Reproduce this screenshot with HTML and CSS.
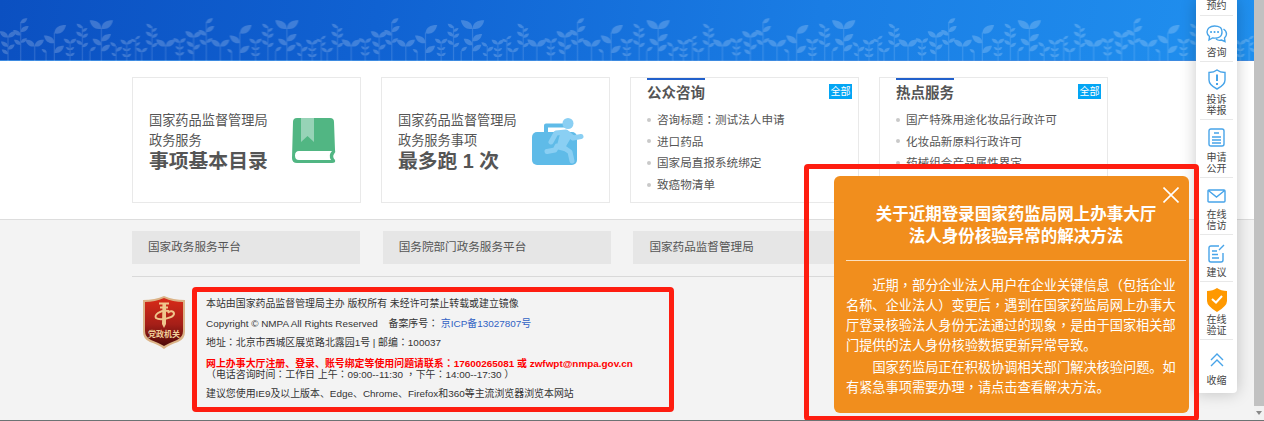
FILE: index.html
```
<!DOCTYPE html>
<html>
<head>
<meta charset="utf-8">
<title>国家药品监督管理局网上办事大厅</title>
<link rel="stylesheet" href="styles.css">
</head>
<body>
<div class="window">
<div class="page">
  <header class="banner">
    <svg class="plants" width="1254" height="61" viewBox="0 0 1254 61">
      <defs>
        <path id="r" d="M0 0C1-13 10-18 25-18C22-4 12 3 0 0Z"/>
        <path id="l" d="M0 0C-1-13-10-18-25-18C-22-4-12 3 0 0Z"/>
        <g id="pair"><use href="#l"/><use href="#r"/></g>
        <g id="bush"><path class="stem" d="M0 0V54"/><use href="#pair" transform="scale(.75)"/><use href="#pair" transform="translate(0 20) scale(.5)"/><use href="#pair" transform="translate(0 38) scale(.55)"/></g>
        <g id="vine"><path class="stem" d="M0-2V100"/><use href="#l" transform="translate(0 3) scale(.7)"/><use href="#r" transform="translate(0 14) scale(.6)"/><use href="#l" transform="translate(0 28) scale(.75)"/><use href="#r" transform="translate(0 32) scale(.7)"/><use href="#l" transform="translate(0 53) scale(.75)"/><use href="#r" transform="translate(0 60) scale(.7)"/></g>
        <pattern id="field" width="185.6" height="61" patternUnits="userSpaceOnUse">
          <g transform="scale(.3333)" class="plant">
            <path class="stem" d="M24 110V183M62 65V183M104 138V183M163 98V183M138 158V183M270 153V183M304 84V183M348 138V183M407 115V183M425 155V183M497 138V183"/>
            <use href="#pair" transform="translate(24 112)"/><use href="#l" transform="translate(24 140) scale(.85)"/><use href="#r" transform="translate(24 148) scale(.8)"/><use href="#l" transform="translate(24 162) scale(.75)"/>
            <use href="#l" transform="translate(581 112)"/>
            <use href="#r" transform="translate(62 69) scale(.8)"/><use href="#r" transform="translate(62 95) scale(.95)"/><use href="#l" transform="translate(62 106) scale(.9)"/><use href="#r" transform="translate(62 128) scale(.75)"/><use href="#l" transform="translate(62 134) scale(.8)"/>
            <use href="#pair" transform="translate(104 139) scale(1.1)"/>
            <use href="#r" transform="translate(163 100) scale(1.4)"/><use href="#l" transform="translate(163 129) scale(1.25)"/><use href="#r" transform="translate(163 158) scale(1.15)"/><use href="#l" transform="translate(140 158) scale(.6)"/>
            <use href="#bush" transform="translate(210 130)"/>
            <use href="#vine" transform="translate(247 81)"/>
            <use href="#r" transform="translate(270 153) scale(.7)"/>
            <use href="#pair" transform="translate(304 86) scale(1.4)"/><use href="#r" transform="translate(304 123) scale(1.15)"/><use href="#l" transform="translate(304 135) scale(1.05)"/><use href="#r" transform="translate(304 153) scale(1.05)"/>
            <use href="#l" transform="translate(348 139) scale(.7)"/><use href="#r" transform="translate(348 154) scale(.75)"/><use href="#l" transform="translate(348 168) scale(.55)"/>
            <use href="#bush" transform="translate(380 133)"/>
            <use href="#r" transform="translate(407 117) scale(.55)"/><use href="#l" transform="translate(407 126) scale(.55)"/><use href="#r" transform="translate(407 137) scale(.55)"/>
            <use href="#pair" transform="translate(425 156) scale(.7)"/>
            <use href="#vine" transform="translate(456 81)"/>
            <use href="#pair" transform="translate(497 139) scale(1.15)"/>
            <use href="#bush" transform="translate(539 128)"/>
          </g>
        </pattern>
      </defs>
      <rect width="1254" height="61" fill="url(#field)"/>
    </svg>
  </header>

  <main class="services">
    <section class="card entry">
      <div class="entry-text"><p>国家药品监督管理局<br>政务服务</p><h2>事项基本目录</h2></div>
      <svg class="book" width="44" height="46" viewBox="0 0 44 46">
        <path fill="#51b683" d="M5 0H38Q42 0 42 4L43 32Q44 34 42 36Q40 39 43 42Q44 45 40 45H5Q0 45 0 40L1 4Q1 0 5 0Z"/>
        <path fill="#fff" d="M7 33H40Q36 37 39 42H7Q3 42 3 37.500Q3 33 7 33Z"/>
        <path fill="#97d3b7" d="M9 0H22V24L15.500 18L9 24Z"/>
      </svg>
    </section>
    <section class="card entry">
      <div class="entry-text"><p>国家药品监督管理局<br>政务服务事项</p><h2>最多跑 1 次</h2></div>
      <svg class="case" width="53" height="47" viewBox="0 0 53 47">
        <path fill="none" stroke="#5fbbe8" stroke-width="4" stroke-linejoin="round" d="M14 15V7.500H34"/>
        <rect y="14" width="45" height="33" rx="5" fill="#5fbbe8"/>
        <circle cx="36" cy="5.500" r="5.500" fill="#8acff3"/>
        <path fill="none" stroke="#8acff3" stroke-width="5" stroke-linecap="round" stroke-linejoin="round" d="M19 24L24 15L34 14L41 20L49 18.500M25 28L23 32L15 33.500M31 29L38 34L40 43"/>
        <path fill="#8acff3" d="M25 13H37L40 18L33 30L36 34L24 31L28 16Z"/>
      </svg>
    </section>
    <section class="card news">
      <div class="news-head"><h3>公众咨询</h3><a>全部</a></div>
      <ul><li><span>咨询标题<i>：</i>测试法人申请</span></li><li>进口药品</li><li>国家局直报系统绑定</li><li>致癌物清单</li></ul>
    </section>
    <section class="card news">
      <div class="news-head"><h3>热点服务</h3><a>全部</a></div>
      <ul><li>国产特殊用途化妆品行政许可</li><li>化妆品新原料行政许可</li><li>药械组合产品属性界定</li></ul>
    </section>
  </main>

  <footer class="footer">
    <nav class="links"><a>国家政务服务平台</a><a>国务院部门政务服务平台</a><a>国家药品监督管理局</a><a></a></nav>
    <div class="about">
      <svg class="badge" width="44" height="53" viewBox="0 0 44 53">
        <defs><linearGradient id="red" x2="0" y2="1"><stop offset="0" stop-color="#d92b18"/><stop offset=".55" stop-color="#a51f18"/><stop offset="1" stop-color="#4c0908"/></linearGradient></defs>
        <path fill="#dbb387" d="M22 0Q31 4 43 4V36Q43 43 36 46Q27 49 22 53Q17 49 8 46Q1 43 1 36V4Q13 4 22 0Z"/>
        <path fill="url(#red)" d="M22 2Q31 6 41 6V35Q41 41 35 44Q27 47 22 50Q17 47 9 44Q3 41 3 35V6Q13 6 22 2Z"/>
        <path fill="none" stroke="#efc78c" stroke-width="2" d="M17 7.500H27M18 11.500H26M27 15C17 14 12 19 14 22C18 25 31 22 32 18C32 15 28 14 26 17"/>
        <path fill="#efc78c" d="M20.500 7H24V28L22 32L20 28Z"/>
        <text x="22" y="41" text-anchor="middle">党政机关</text>
      </svg>
      <div class="legal">
        <p>本站由国家药品监督管理局主办 版权所有 未经许可禁止转载或建立镜像</p>
        <p class="copy">Copyright © NMPA All Rights Reserved <span>备案序号<i>：</i> <a>京ICP备13027807号</a></span></p>
        <p>地址<i>：</i>北京市西城区展览路北露园1号 | 邮编<i>：</i>100037</p>
        <p class="contact"><b>网上办事大厅注册、登录、账号绑定等使用问题请联系<i>：</i>17600265081 或 zwfwpt@nmpa.gov.cn</b><br>（电话咨询时间<i>：</i>工作日 上午<i>：</i>09:00--11:30 <i>，</i>下午<i>：</i>14:00--17:30 ）</p>
        <p>建议您使用IE9及以上版本、Edge、Chrome、Firefox和360等主流浏览器浏览本网站</p>
      </div>
    </div>
  </footer>
</div>
<div class="scrollbar"><div class="down"></div></div>

<aside class="rail">
  <a class="i1">预约</a>
  <a class="i2"><svg width="22" height="18" viewBox="0 0 22 18"><path d="M14.500 2.500Q12 1 8.500 1C4 1 1 3.500 1 7Q1 9.500 3.500 11.500L3 15L6.500 13Q16 14 16 7Q16 4 14.500 2.500M17.500 4Q20.500 6 20.500 9Q20.500 11 18.500 13L19 16.500L15.500 15Q12.500 16 10 14"/><path class="dots" d="M5 7h.1M8.500 7h.1M12 7h.1"/></svg><span>咨询</span></a>
  <a class="i3"><svg width="18" height="21" viewBox="0 0 18 21"><path d="M9 1Q12 3.500 17 3.500V11Q17 16 9 20Q1 16 1 11V3.500Q6 3.500 9 1Z"/><path class="bold" d="M9 5.500V12M9 14V16"/></svg><span>投诉<br>举报</span></a>
  <a class="i4"><svg width="17" height="19" viewBox="0 0 17 19"><path d="M3 1H14Q16 1 16 3V16Q16 18 14 18H3Q1 18 1 16V3Q1 1 3 1ZM6 5H11M4 9H13M4 12H13M4 15H13"/></svg><span>申请<br>公开</span></a>
  <a class="i5"><svg width="19" height="14" viewBox="0 0 19 14"><path d="M2 1H17Q18 1 18 2V12Q18 13 17 13H2Q1 13 1 12V2Q1 1 2 1ZM2 2L9.500 8L17 2"/></svg><span>在线<br>信访</span></a>
  <a class="i6"><svg width="17" height="19" viewBox="0 0 17 19"><path d="M11 2H3Q1 2 1 4V16Q1 18 3 18H13Q15 18 15 16V9M4 7H9M4 10.500H10M4 14H11M16 1L11 6"/></svg><span>建议</span></a>
  <a class="i7"><svg width="20" height="24" viewBox="0 0 20 24"><path class="solid" d="M10 0Q14 3 20 3V13Q20 18 10 24Q0 18 0 13V3Q6 3 10 0Z"/><path class="tick" d="M5 11L9 14.500L15 8"/></svg><span>在线<br>验证</span></a>
  <a class="i8"><svg width="14" height="14" viewBox="0 0 14 14"><path d="M1 7L7 1L13 7M1 13L7 7L13 13"/></svg><span>收缩</span></a>
</aside>

<div class="popup">
  <svg class="close" width="16" height="16" viewBox="0 0 16 16"><path d="M.5.500L15.500 15.500M15.500.500L.5 15.500"/></svg>
  <h1>关于近期登录国家药监局网上办事大厅<br>法人身份核验异常的解决方法</h1>
  <div class="popup-body">
    <p>近期<i>，</i>部分企业法人用户在企业关键信息（包括企业<br>名称、企业法人）变更后<i>，</i>遇到在国家药监局网上办事大<br>厅登录核验法人身份无法通过的现象<i>，</i>是由于国家相关部<br>门提供的法人身份核验数据更新异常导致。</p>
    <p>国家药监局正在积极协调相关部门解决核验问题。如<br>有紧急事项需要办理<i>，</i>请点击查看解决方法。</p>
  </div>
</div>
<div class="mark mark-legal"></div>
<div class="mark mark-popup"></div>
</div>
</body>
</html>
```
FILE: styles.css
```
* { box-sizing: border-box; margin: 0; padding: 0; }
body { font-family: "Liberation Sans", "Noto Sans CJK SC", sans-serif; color: #555; background: #fff; overflow: hidden; }
ul { list-style: none; }
/* centred full-width punctuation */
i { font-style: normal; font-family: "Noto Sans CJK TC", sans-serif; line-height: 1; }
svg { display: block; flex: none; }
.window { position: relative; display: flex; width: 1264px; height: 421px; overflow: hidden; border-bottom: 1px solid #6b7373; }
.page { width: 1254px; flex: none; }
.scrollbar { width: 10px; background: #c1c1c1; display: flex; flex-direction: column; justify-content: flex-end; }
.down { height: 14px; background: #f1f1f1; display: flex; justify-content: center; align-items: center; }
.down::after { content: ""; border: 3px solid transparent; border-top: 4px solid #888; border-bottom: 0; }

.banner { height: 61px; background: linear-gradient(100deg, #0b50c1 0%, #1062d2 30%, #1a7de4 65%, #2090ef 100%); border-bottom: 1px solid #3d8ae0; }
.plant { fill: #fff; opacity: .2; }
.stem { fill: none; stroke: #fff; stroke-width: 3.5; stroke-opacity: .7; }

.services { height: 158px; padding: 16px 145px 0 132px; display: grid; grid-template-columns: repeat(4, 229px); column-gap: 20px; align-items: start; }
.card { height: 126px; border: 1px solid #e9e9e9; background: #fff; }
.entry { display: flex; justify-content: space-between; padding: 33px 24px 0 16px; }
.entry p { font-size: 13.2px; line-height: 19.7px; white-space: nowrap; }
.entry h2 { font-size: 19.8px; line-height: 22px; white-space: nowrap; }
.book { margin-top: 7px; }
.case { margin-top: 7px; }
.news { padding: 0 6px 0 16px; }
.news-head { display: flex; justify-content: space-between; align-items: flex-start; }
.news h3 { font-size: 14.5px; line-height: 27px; height: 31px; border-top: 2px solid #2160cb; }
.news-head a { background: #03a5f4; color: #fff; font-size: 10px; line-height: 15px; padding: 0 1.5px; margin-top: 6px; }
.news li { display: flex; align-items: center; gap: 6px; font-size: 11.6px; line-height: 21.6px; white-space: nowrap; }
.news li::before { content: ""; width: 4px; height: 4px; border-radius: 50%; background: #c9c9c9; }

.footer { height: 201px; background: #f3f3f3; border-top: 1px solid #ddd; padding: 11px 145px 0 132px; }
.links { display: grid; grid-template-columns: repeat(4, 228px); column-gap: 22.7px; padding-bottom: 12px; border-bottom: 1px solid #d9d9d9; }
.links a { height: 33px; background: #e6e6e6; padding-left: 16px; font-size: 11.6px; line-height: 32px; }
.about { display: flex; padding: 17px 0 0 10px; gap: 20px; }
.badge { margin-top: 2px; }
.badge text { font-size: 8px; font-weight: 700; fill: #f0d09c; }
.legal { font-size: 9.91px; line-height: 19.6px; color: #333; white-space: nowrap; }
.legal .contact { line-height: 11px; padding: 5px 0 4px; }
.copy span { margin-left: 8px; }
.legal a { color: #3162c4; }
.legal b { color: #f00; }

.rail { position: absolute; left: 1196px; top: 0; width: 41px; height: 393px; background: #fff; border-radius: 0 0 4px 4px; box-shadow: 0 0 16px rgba(0,0,0,.22); padding: 0 4px; }
.rail a { display: flex; flex-direction: column; align-items: center; justify-content: space-between; border-bottom: 1px solid #e8e8e8; font-size: 10px; line-height: 11.6px; text-align: center; color: #444; padding-bottom: 2px; }
.rail svg { fill: none; stroke: #47a4e9; stroke-width: 1.4; }
.rail .dots { stroke-width: 2; stroke-linecap: round; }
.rail .bold { stroke-width: 2; }
.rail .solid { fill: #ff9900; stroke: none; }
.rail .tick { stroke: #fff; stroke-width: 2; }
.rail .i1 { height: 16px; justify-content: flex-end; padding-bottom: 3px; }
.rail .i2 { height: 46px; padding-top: 9px; }
.rail .i3 { height: 58px; padding-top: 7px; }
.rail .i4 { height: 58px; padding-top: 8px; }
.rail .i5 { height: 57px; padding-top: 11px; }
.rail .i6 { height: 47px; padding-top: 9px; }
.rail .i7 { height: 58px; padding-top: 6px; }
.rail .i8 { height: 53px; padding: 13px 0 6px; border: 0; }

.popup { position: absolute; left: 834px; top: 176px; width: 355px; height: 237px; padding: 28px 3px 0 12px; background: #f18e1d; border-radius: 6px; color: #fff; }
.close { position: absolute; left: 329px; top: 11px; stroke: #fff; stroke-width: 1.6; }
.popup h1 { font-size: 16.5px; line-height: 21.6px; text-align: center; white-space: nowrap; padding-bottom: 13px; border-bottom: 1px solid #fbe0c0; }
.popup-body { padding-top: 15px; font-size: 13.2px; line-height: 19.8px; white-space: nowrap; }
.popup-body p { text-indent: 2em; margin-bottom: 3px; }
.mark { position: absolute; border: 5px solid #fe1d10; border-radius: 4px; }
.mark-legal { left: 192px; top: 287px; width: 482px; height: 125px; }
.mark-popup { left: 804px; top: 164px; width: 395px; height: 257px; }
```
